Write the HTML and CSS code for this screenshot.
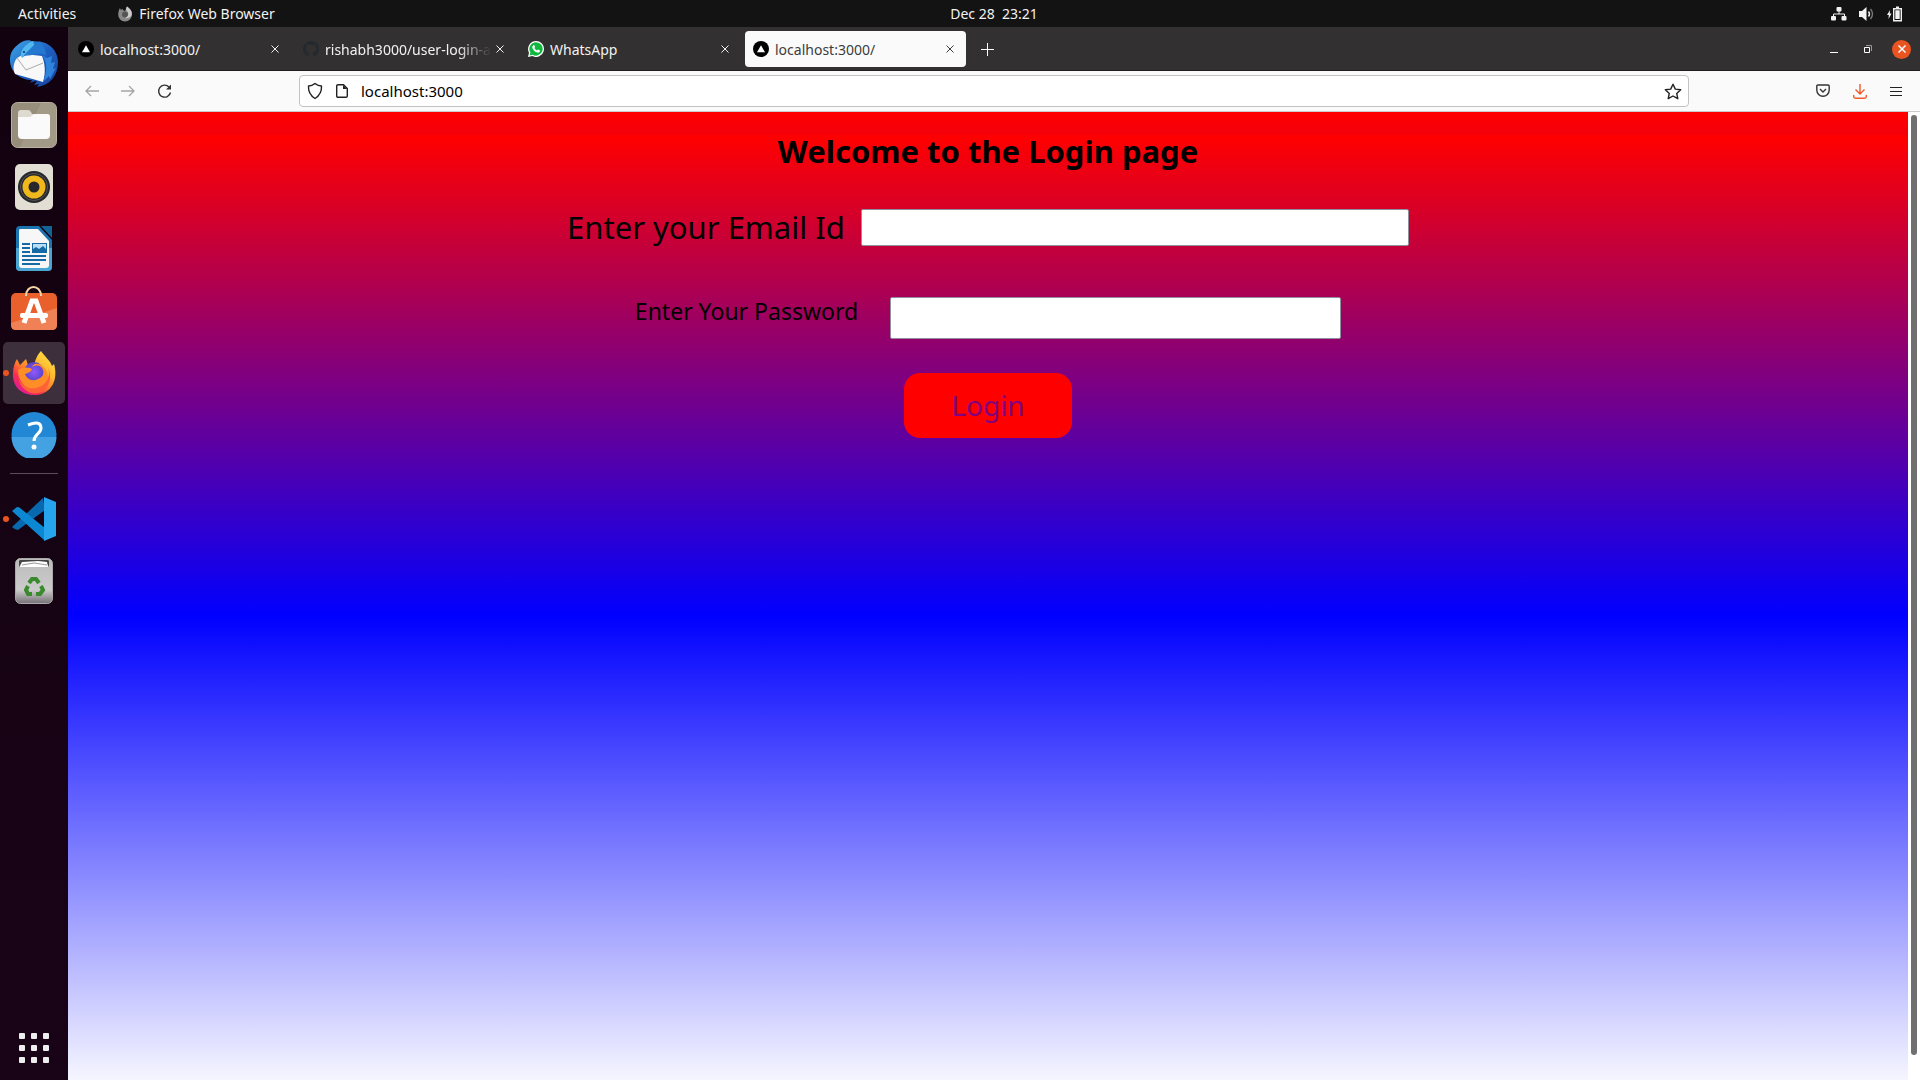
FILE: index.html
```html
<!DOCTYPE html>
<html lang="en">
<head>
<meta charset="utf-8">
<title>Desktop</title>
<link rel="stylesheet" href="styles.css">
</head>
<body>
<svg class="defs" aria-hidden="true">
  <symbol id="i-next" viewBox="0 0 16 16"><circle cx="8" cy="8" r="8" fill="#000"/><path d="M8 4.200l4 7H4z" fill="#fff"/></symbol>
  <symbol id="i-x" viewBox="0 0 8 8"><path d="M.5.5l7 7M7.500.5l-7 7" stroke="currentColor" fill="none"/></symbol>
</svg>
<header class="topbar">
  <div class="top-left">
    <button class="plain">Activities</button>
    <button class="plain app-menu">
      <svg width="16" height="16" viewBox="0 0 16 16"><path d="M8 15.500A6.800 6.800 0 0 1 1.200 8.500C1.200 6 2 3.500 3 2l.8 2L5.500 3l1 1.500L8 5 10 .5c1.500 1 2 2 2.500 3.500l.7-.8A8 8 0 0 1 15 8.500a7 7 0 0 1-7 7z" fill="#888"/><circle cx="8" cy="8.500" r="3" fill="#555"/><path d="M10 .5c-2 3 0 4 1 6 1 3-1 5-3 5.500 4 1 7-2 6.800-4.500C14.700 5 13.500 3 10 .5z" fill="#ccc"/></svg>
      Firefox Web Browser
    </button>
  </div>
  <button class="plain clock"><time>Dec 28&nbsp; 23:21</time></button>
  <div class="tray">
    <svg width="16" height="14" viewBox="0 0 16 14" fill="#f2f2f2"><rect x="5.500" y="0" width="5" height="4.500" rx="1"/><rect x="0" y="9" width="5" height="4.500" rx="1"/><rect x="10.500" y="9" width="5" height="4.500" rx="1"/><path d="M8 4v3M2.500 10V7h11v3" fill="none" stroke="#f2f2f2"/></svg>
    <svg width="16" height="14" viewBox="0 0 16 14"><path d="M0 4h3l4.500-4v14L3 10H0z" fill="#f2f2f2"/><path d="M9.500 4.500q2 2.500 0 5" fill="none" stroke="#f2f2f2" stroke-width="1.400"/><path d="M11.500 2q4 5 0 10" fill="none" stroke="#777" stroke-width="1.400"/></svg>
    <svg width="16" height="16" viewBox="0 0 16 16"><path d="M3 4L0 9h1.800L1.500 13l3-5.500H2.800z" fill="#f2f2f2"/><path d="M6.700 2.700h7.600v12H6.700z" fill="none" stroke="#f2f2f2" stroke-width="1.400"/><path d="M9 .5h3v2H9zM8.300 4.300h4.400v8.800H8.300z" fill="#f2f2f2"/></svg>
  </div>
</header>
<div class="desktop">
  <nav class="dock" aria-label="Dock">
    <button class="app" aria-label="Thunderbird">
      <svg width="48" height="50" viewBox="0 0 48 50"><defs><linearGradient id="tb" x1="0" y1="0" x2="1" y2="1"><stop offset="0" stop-color="#3fa7e8"/><stop offset=".5" stop-color="#1d5fc0"/><stop offset="1" stop-color="#17409a"/></linearGradient></defs><path d="M10 5C14 2 20 1 23 4c13-3 25 7 25 20 0 14-8 23-21 25l2-3-5 1 3-4-8 3 3-4C10 42 0 34 0 22 0 15 3 10 10 5z" fill="url(#tb)"/><path d="M4 38q9 6 18 4l-4 3 8-2-2 4Q12 47 4 38z" fill="#140410"/><path d="M7 20l7-4 18 2c3 8 4 16 1 26L5 36C2 30 4 24 7 20z" fill="#f8f8f8"/><path d="M7 20l9 12 17-7" fill="none" stroke="#aaa"/><path d="M23 3c8 1 13 6 13 15-4-3-8-3-14-1-5 1-8 0-10 3 0-6 3-13 11-17z" fill="#2478d0"/><path d="M11 18c-1-5 4-12 12-15l1 4-8 8-4 5z" fill="#52b8ee"/><circle cx="14" cy="14" r="1" fill="#103060"/><path d="M32 17c6 7 5 18 1 27l6-6 1 3 6-11-3 1 2-7-4 1 1-7-5 2z" fill="#2f83dc"/></svg>
    </button>
    <button class="app" aria-label="Files">
      <svg width="46" height="46" viewBox="0 0 46 46"><rect x=".5" y=".5" width="45" height="45" rx="6" fill="#968e7b" stroke="#b9b29f"/><path d="M30 1h10q5 0 5 5v34q0 5-5 5H9z" fill="#a29a87"/><path d="M7 11q0-3 3-3h7q2 0 3 2l1 2h15q3 0 3 3v8H7z" fill="#dedad0"/><path d="M7 15h12l4-3h13q3 0 3 3v18q0 4-4 4H11q-4 0-4-4z" fill="#fafafa"/></svg>
    </button>
    <button class="app" aria-label="Rhythmbox">
      <svg width="38" height="46" viewBox="0 0 38 46"><rect width="38" height="46" rx="5" fill="#e3ded3"/><circle cx="19" cy="23" r="16" fill="#26282b"/><circle cx="19" cy="23" r="13.500" fill="none" stroke="#555"/><circle cx="19" cy="23" r="11.500" fill="#efb81c"/><circle cx="19" cy="23" r="5.500" fill="#26282b"/></svg>
    </button>
    <button class="app" aria-label="LibreOffice Writer">
      <svg width="38" height="46" viewBox="0 0 38 46"><path d="M5 0h19l13 14v27q0 4-4 4H5q-4 0-4-4V4q0-4 4-4z" fill="#1b74ae"/><path d="M1 22h36v19q0 4-4 4H5q-4 0-4-4z" fill="#4aa5d2"/><path d="M5 3h18l11 12v24q0 3-3 3H7q-3 0-3-3V5q0-2 1-2z" fill="#f7f7f7"/><path d="M26 0h11v12z" fill="#126496"/><path d="M7 18h8M7 22h8M7 26h8M7 30h24M7 34h24M7 38h18" stroke="#1569a5" stroke-width="2"/><rect x="17.500" y="17.500" width="14" height="9" fill="#b8dff5" stroke="#1569a5"/><path d="M18 26v-3l3-2 3 2 4-3 3 3v3z" fill="#1569a5"/></svg>
    </button>
    <button class="app" aria-label="Ubuntu Software">
      <svg width="46" height="50" viewBox="0 0 46 50"><rect y="7" width="46" height="37" rx="5" fill="#e9602d"/><path d="M0 37L46 22v17q0 5-5 5H5q-5 0-5-5z" fill="#f08055"/><path d="M15 10C15-2 30-2 30 10" fill="none" stroke="#f5d6a5" stroke-width="2"/><path d="M13 37l8-22h4l8 22" fill="none" stroke="#fff" stroke-width="5"/><rect x="9" y="27" width="28" height="5" rx="2" fill="#fff"/></svg>
    </button>
    <button class="app running active" aria-label="Firefox">
      <svg width="44" height="46" viewBox="0 0 44 46"><defs><linearGradient id="ff" x1="1" y1="0" x2=".2" y2="1"><stop offset="0" stop-color="#fff04a"/><stop offset=".4" stop-color="#ffb52e"/><stop offset=".6" stop-color="#ff7a2c"/><stop offset=".8" stop-color="#f82a55"/><stop offset="1" stop-color="#d817a8"/></linearGradient><radialGradient id="fp"><stop offset="0" stop-color="#9059ff"/><stop offset="1" stop-color="#5a43c8"/></radialGradient></defs><path d="M5 9l3 6 6-6 2 6 6 2C23 9 26 4 29 1c3 5 9 9 11 15l2-2c5 17-4 31-20 31C8 45 0 35 1 23 1 17 3 12 5 9z" fill="url(#ff)"/><circle cx="22" cy="22" r="10" fill="url(#fp)"/><path d="M6 20c4-3 9-3 14-1-1 3-4 4-7 5 2 5 7 8 13 5 6-2 7-8 3-12-4-3-7-1-9 0 2-4 5-4 9-2 7 5 9 12 5 19-4 6-13 8-20 3C9 33 6 27 6 20z" fill="#ff8e29"/><path d="M6 27c3 9 12 14 21 10 8-3 12-11 9-19 4 8 2 18-5 23-9 6-22 1-25-14z" fill="#ff6138"/></svg>
    </button>
    <button class="app" aria-label="Help">
      <svg width="46" height="46" viewBox="0 0 46 46"><circle cx="23" cy="22.500" r="22.500" fill="#2287d5"/><path d="M.5 25h45a22.500 22.500 0 0 1-45 0z" fill="#45a2e2"/><path d="M17 13q13-5 13 3c0 6-7 6-7 13" fill="none" stroke="#fff" stroke-width="3"/><circle cx="23" cy="35" r="2.500" fill="#fff"/></svg>
    </button>
    <hr class="divider">
    <button class="app running" aria-label="Visual Studio Code">
      <svg width="44" height="44" viewBox="0 0 44 44"><path d="M0 30l31-29 2 12L6 33q-3 0-6-3z" fill="#0869ae"/><path d="M0 14l5-4q2 0 3 1l25 20-1 12z" fill="#0c88d2"/><path d="M32 0l12 5v34l-12 5z" fill="#27a4ee"/></svg>
    </button>
    <button class="app" aria-label="Trash">
      <svg width="38" height="46" viewBox="0 0 38 46"><defs><linearGradient id="tr" x1="0" y1="0" x2="0" y2="1"><stop offset="0" stop-color="#bbb"/><stop offset=".7" stop-color="#cbcbcb"/><stop offset="1" stop-color="#777077"/></linearGradient></defs><rect x=".5" y=".5" width="37" height="45" rx="5" fill="url(#tr)" stroke="#aaa"/><path d="M4 9V3q0-1 2-1h26q2 0 2 1v6l-3-5H7z" fill="#444"/><path d="M5 9l2-5 16-1 9 1 1 5z" fill="#fff"/><path d="M7 7l12-2 13 2" fill="none" stroke="#999"/><g fill="none" stroke="#398a2d" stroke-width="4"><path d="M14 25l3-4h4l3 4M26 28l2 4-3 4h-4M17 36h-4l-2-4 2-4"/></g></svg>
    </button>
    <button class="app grid-app" aria-label="Show Applications">
      <svg width="30" height="30" viewBox="0 0 30 30" fill="#eee"><g id="dots"><rect width="6" height="6" rx="1"/><rect x="12" width="6" height="6" rx="1"/><rect x="24" width="6" height="6" rx="1"/></g><use href="#dots" y="12"/><use href="#dots" y="24"/></svg>
    </button>
  </nav>
  <section class="browser">
    <div class="tabs">
      <div class="tab"><svg class="fav"><use href="#i-next"/></svg><span class="tab-title">localhost:3000/</span><button class="plain close" aria-label="Close tab"><svg width="8" height="8"><use href="#i-x"/></svg></button></div>
      <div class="tab"><svg class="fav" viewBox="0 0 16 16"><path d="M8 0a8 8 0 0 0-2.500 15.600c.4 0 .5-.2.5-.4v-1.400c-2.200.5-2.700-1-2.700-1-.4-1-.9-1.200-.9-1.200-.7-.5 0-.5 0-.5.8 0 1.300.8 1.300.8.7 1.300 1.900.9 2.300.7.100-.5.3-.9.5-1.100C4.700 11.300 3 10.600 3 7.600c0-.9.300-1.600.8-2.100-.1-.3-.4-1.100.1-2.200 0 0 .7-.2 2.200.8a7.500 7.500 0 0 1 4 0c1.500-1 2.200-.8 2.200-.8.500 1.100.2 1.900.1 2.200.5.500.8 1.200.8 2.100 0 3-1.900 3.700-3.600 3.900.3.200.5.700.5 1.500v2.200c0 .2.100.5.500.4A8 8 0 0 0 8 0z" fill="#24292e"/></svg><span class="tab-title fade">rishabh3000/user-login-a</span><button class="plain close" aria-label="Close tab"><svg width="8" height="8"><use href="#i-x"/></svg></button></div>
      <div class="tab"><svg class="fav" viewBox="0 0 16 16"><path d="M8 0a8 8 0 1 1-3.700 15.100L0 16l1-4.200A8 8 0 0 1 8 0z" fill="#fff"/><path d="M8 1.200a6.700 6.700 0 1 1-3.400 12.500l-3 .8.800-3A6.700 6.700 0 0 1 8 1.200z" fill="#10b93e"/><path d="M5.200 4.200l1-.1.900 2-.7 1c.6 1.200 1.500 2 2.700 2.500l.9-1 2 1c0 1.500-1.200 2.200-2.400 2C6.700 11 4.500 8.500 4.200 6.200c0-.8.400-1.500 1-2z" fill="#fff"/></svg><span class="tab-title">WhatsApp</span><button class="plain close" aria-label="Close tab"><svg width="8" height="8"><use href="#i-x"/></svg></button></div>
      <div class="tab current"><svg class="fav"><use href="#i-next"/></svg><span class="tab-title">localhost:3000/</span><button class="plain close" aria-label="Close tab"><svg width="8" height="8"><use href="#i-x"/></svg></button></div>
      <button class="plain new-tab" aria-label="New tab"><svg width="13" height="13"><path d="M6.500 0v13M0 6.500h13" stroke="#fff"/></svg></button>
      <div class="window-controls">
        <button class="plain" aria-label="Minimize"><svg width="8" height="8"><path d="M0 7.500h8" stroke="#fff"/></svg></button>
        <button class="plain" aria-label="Restore"><svg width="8" height="8"><path d="M.5 2.500h5v5h-5z" fill="none" stroke="#fff"/><path d="M2 .5h5.500V6" fill="none" stroke="#999"/></svg></button>
        <button class="plain window-close" aria-label="Close"><svg width="8" height="8" viewBox="0 0 8 8"><path d="M.5.5l7 7M7.500.5l-7 7" stroke="#fff" stroke-width="1.500"/></svg></button>
      </div>
    </div>
    <div class="toolbar">
      <div class="nav-buttons">
        <button class="plain dim" aria-label="Back"><svg width="14" height="12"><path d="M14 6H1M6 1L1 6l5 5" fill="none" stroke="currentColor" stroke-width="1.300"/></svg></button>
        <button class="plain dim" aria-label="Forward"><svg width="14" height="12"><path d="M0 6h13M8 1l5 5-5 5" fill="none" stroke="currentColor" stroke-width="1.300"/></svg></button>
        <button class="plain" aria-label="Reload"><svg width="16" height="16"><path d="M13.500 9.500A6 6 0 1 1 12 4" fill="none" stroke="#333" stroke-width="1.400"/><path d="M14 1.500v5H9z" fill="#333"/></svg></button>
      </div>
      <div class="urlbar">
        <svg width="16" height="18"><path d="M8 1.500q3 2.500 6.500 2.500Q15 12 8 16.500 1 12 1.500 4 5 4 8 1.500z" fill="none" stroke="#222" stroke-width="1.400" stroke-linejoin="round"/></svg>
        <svg width="12" height="14"><path d="M2 .7h5.500L11.300 4.500V12q0 1.300-1.300 1.300H2Q.7 13.300.7 12V2Q.7.7 2 .7z" fill="none" stroke="#222" stroke-width="1.400"/><path d="M7 1v4h4z" fill="#222"/></svg>
        <input class="url" aria-label="Address" value="localhost:3000">
        <button class="plain" aria-label="Bookmark"><svg width="18" height="17" viewBox="0 0 18 17"><path d="M9 1.200l2.300 4.900 5.400.6-4 3.700 1.100 5.300L9 13l-4.800 2.700 1.100-5.300-4-3.700 5.400-.6z" fill="none" stroke="#222" stroke-width="1.400" stroke-linejoin="round"/></svg></button>
      </div>
      <div class="actions">
        <button class="plain" aria-label="Pocket"><svg width="14" height="14"><path d="M2 1h10q1.200 0 1.200 1.200V6a6.200 6.200 0 0 1-12.400 0V2.200Q.8 1 2 1z" fill="none" stroke="#333" stroke-width="1.400"/><path d="M4 5l3 3 3-3" fill="none" stroke="#333" stroke-width="1.400"/></svg></button>
        <button class="plain" aria-label="Downloads"><svg width="14" height="16"><path d="M7 1v10M2.500 6.500L7 11l4.500-4.500M.7 12v1.500q0 1.700 1.800 1.700h9q1.800 0 1.800-1.700V12" fill="none" stroke="#f05a2b" stroke-width="1.400"/></svg></button>
        <button class="plain" aria-label="Menu"><svg width="12" height="9"><path d="M0 .5h12M0 4.500h12M0 8.500h12" stroke="#222"/></svg></button>
      </div>
    </div>
    <div class="viewport">
      <main class="page">
        <h1>Welcome to the Login page</h1>
        <form>
          <div class="row email"><label for="email">Enter your Email Id</label><input id="email" type="email"></div>
          <div class="row password"><label for="password">Enter Your Password</label><input id="password" type="password"></div>
          <button class="login" type="button">Login</button>
        </form>
      </main>
      <div class="scrollbar"><div class="thumb"></div></div>
    </div>
  </section>
</div>
</body>
</html>
```
FILE: styles.css
```css
* { box-sizing: border-box; }

body {
  display: flex;
  flex-direction: column;
  height: 100vh;
  margin: 0;
  overflow: hidden;
  font: 14px/20px "Noto Sans", "Open Sans", sans-serif;
}

svg { display: block; flex: none; }
.defs { position: absolute; width: 0; height: 0; }

.plain {
  display: flex;
  align-items: center;
  padding: 0;
  border: 0;
  background: none;
  color: inherit;
  font: inherit;
}

.topbar {
  display: grid;
  grid-template-columns: 68px 1fr auto 1fr;
  align-items: center;
  height: 27px;
  background: #131313;
  color: #f2f2f2;
}
.top-left { display: flex; grid-column: 1 / 3; gap: 41px; padding-left: 18px; }
.app-menu { gap: 6px; }
.tray { display: flex; justify-content: flex-end; align-items: center; gap: 12px; padding-right: 17px; }

.desktop { display: flex; flex: 1; min-height: 0; }

.dock {
  display: flex;
  flex-direction: column;
  align-items: center;
  width: 68px;
  padding: 5px 0 1px;
  background: linear-gradient(#12010f, #190417);
}
.app {
  position: relative;
  display: flex;
  align-items: center;
  justify-content: center;
  width: 62px;
  height: 62px;
  padding: 0;
  border: 0;
  border-radius: 5px;
  background: none;
}
.active { background: #3d2f3c; }
.running::before {
  content: "";
  position: absolute;
  left: 0;
  width: 6px;
  height: 6px;
  border-radius: 50%;
  background: #e95420;
}
.divider {
  width: 48px;
  margin: 7px 0 14px;
  border: 0;
  border-top: 1px solid #5a4d59;
}
.grid-app { margin-top: auto; }

.browser { display: flex; flex: 1; flex-direction: column; min-width: 0; }

.tabs {
  display: flex;
  align-items: center;
  gap: 4px;
  height: 44px;
  padding: 1px 9px 0 2px;
  border-bottom: 1px solid #1f1d1e;
  background: #333031;
  color: #f2f2f2;
}
.tab {
  display: flex;
  align-items: center;
  width: 221px;
  height: 36px;
  padding: 0 6px 0 8px;
  border-radius: 4px;
}
.fav { width: 16px; height: 16px; margin-right: 6px; }
.tab-title { flex: 1; padding-top: 2px; white-space: nowrap; }
.fade { mask-image: linear-gradient(90deg, #000 80%, transparent); }
.close { justify-content: center; width: 20px; height: 20px; }
.current { background: #fafafa; color: #3c3c3c; }
.new-tab { padding: 4px 11px; }
.window-controls { display: flex; align-items: center; gap: 15px; margin-left: auto; }
.window-controls .plain { justify-content: center; width: 19px; height: 19px; }
.window-controls .window-close { border-radius: 50%; background: #e95420; }

.toolbar {
  display: grid;
  grid-template-columns: 231px 1fr 231px;
  align-items: center;
  height: 41px;
  border-bottom: 1px solid #ccc;
  background: #fafafa;
}
.nav-buttons { display: flex; align-items: center; gap: 22px; padding-left: 17px; }
.dim { color: #a5a5a5; }
.urlbar {
  display: flex;
  align-items: center;
  gap: 13px;
  height: 32px;
  padding: 0 6px 0 7px;
  border: 1px solid #c3c3c3;
  border-radius: 4px;
  background: #fff;
}
.url { flex: 1; padding: 0; border: 0; outline: 0; background: none; color: #000; font: inherit; font-size: 15px; }
.actions { display: flex; justify-content: flex-end; align-items: center; gap: 23px; padding-right: 18px; }

.viewport { display: flex; flex: 1; min-height: 0; }
.page {
  flex: 1;
  padding-top: 16px;
  background: linear-gradient(red, #f4000b 22px, red 24px, blue 504px, #fff 986px);
  color: #000;
}
h1 { margin: 0; font-size: 31px; line-height: 46px; text-align: center; }
form { display: flex; flex-direction: column; align-items: center; }
.row { display: flex; justify-content: center; }
.row input { border: 1px solid #8f8f9d; border-radius: 2px; background: #fff; }
.email { gap: 16px; margin-top: 35px; font-size: 31px; line-height: 36px; }
.email input { width: 548px; height: 37px; }
.password { gap: 32px; margin-top: 51px; font-size: 23px; line-height: 28px; }
.password input { width: 451px; height: 42px; }
.login {
  width: 168px;
  height: 65px;
  margin-top: 34px;
  padding: 0 0 2px;
  border: 0;
  border-radius: 16px;
  background: red;
  color: purple;
  font: inherit;
  font-size: 28px;
}

.scrollbar { display: flex; width: 12px; padding: 3px; background: #fff; }
.thumb { width: 6px; height: calc(100% - 22px); border-radius: 3px; background: #707070; }
```
